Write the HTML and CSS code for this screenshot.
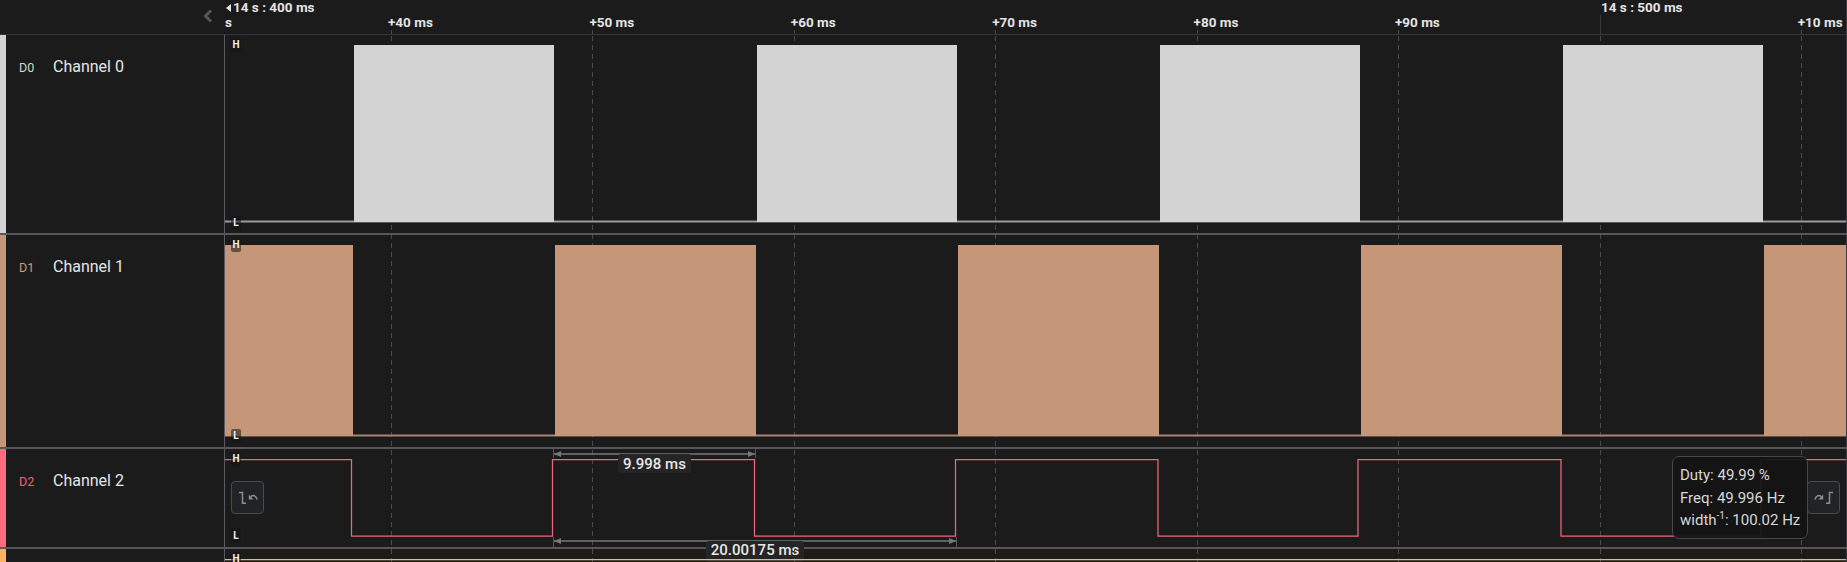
FILE: index.html
```html
<!DOCTYPE html>
<html lang="en">
  <head>
    <meta charset="UTF-8">
    <title>Logic analyzer</title>
    <link rel="stylesheet" href="styles.css">
  </head>
  <body>
    <!-- Time axis -->
    <header class="top">
      <div class="top-side">
        <svg class="chevron" width="10" height="14" viewBox="0 0 10 14"><path d="M8 1.500 2.500 7 8 12.500"/></svg>
      </div>
      <div class="axis">
        <svg class="axis-marks" viewBox="225 0 1621 34">
          <g class="grid">
            <line x1="391.500" y1="30" x2="391.500" y2="34"/>
            <line x1="592.500" y1="30" x2="592.500" y2="34"/>
            <line x1="794.500" y1="30" x2="794.500" y2="34"/>
            <line x1="995.500" y1="30" x2="995.500" y2="34"/>
            <line x1="1197.500" y1="30" x2="1197.500" y2="34"/>
            <line x1="1398.500" y1="30" x2="1398.500" y2="34"/>
            <line x1="1801.500" y1="30" x2="1801.500" y2="34"/>
          </g>
          <line class="major-mark" x1="1600.500" y1="15" x2="1600.500" y2="34"/>
        </svg>
        <div class="axis-major">
          <span class="major-first"><i class="marker"></i>14 s : 400 ms</span>
          <span>14 s : 500 ms</span>
        </div>
        <div class="axis-minor">
          <span class="unit">s</span>
          <span class="tick">+40 ms</span>
          <span class="tick">+50 ms</span>
          <span class="tick">+60 ms</span>
          <span class="tick">+70 ms</span>
          <span class="tick">+80 ms</span>
          <span class="tick">+90 ms</span>
          <span class="tick"></span>
          <span class="tick">+10 ms</span>
        </div>
      </div>
    </header>

    <!-- D0 -->
    <section class="row row-d0">
      <div class="strip"></div>
      <div class="name-col">
        <span class="dnum">D0</span>
        <span class="cname">Channel 0</span>
      </div>
      <div class="plot">
        <svg class="wave" viewBox="225 35 1621 198">
          <defs>
            <g id="grid">
              <line x1="391.500" y1="0" x2="391.500" y2="562"/>
              <line x1="592.500" y1="0" x2="592.500" y2="562"/>
              <line x1="794.500" y1="0" x2="794.500" y2="562"/>
              <line x1="995.500" y1="0" x2="995.500" y2="562"/>
              <line x1="1197.500" y1="0" x2="1197.500" y2="562"/>
              <line x1="1398.500" y1="0" x2="1398.500" y2="562"/>
              <line class="major" x1="1600.500" y1="0" x2="1600.500" y2="562"/>
              <line x1="1801.500" y1="0" x2="1801.500" y2="562"/>
            </g>
          </defs>
          <use href="#grid" class="grid"/>
          <line class="low-d0" x1="225" y1="221.500" x2="1846" y2="221.500"/>
          <g class="fill-d0">
            <rect x="354" y="45" width="200" height="177"/>
            <rect x="757" y="45" width="200" height="177"/>
            <rect x="1160" y="45" width="200" height="177"/>
            <rect x="1563" y="45" width="200" height="177"/>
          </g>
        </svg>
        <span class="lvl lvl-h">H</span>
        <span class="lvl lvl-l">L</span>
      </div>
    </section>

    <!-- D1 -->
    <section class="row row-d1">
      <div class="strip"></div>
      <div class="name-col">
        <span class="dnum">D1</span>
        <span class="cname">Channel 1</span>
      </div>
      <div class="plot">
        <svg class="wave" viewBox="225 235 1621 212">
          <use href="#grid" class="grid"/>
          <line class="low-d1" x1="225" y1="435.500" x2="1846" y2="435.500"/>
          <g class="fill-d1">
            <rect x="225" y="245" width="128" height="191"/>
            <rect x="555" y="245" width="201" height="191"/>
            <rect x="958" y="245" width="201" height="191"/>
            <rect x="1361" y="245" width="201" height="191"/>
            <rect x="1764" y="245" width="82" height="191"/>
          </g>
        </svg>
        <span class="lvl lvl-h">H</span>
        <span class="lvl lvl-l">L</span>
      </div>
    </section>

    <!-- D2, with measurements -->
    <section class="row row-d2">
      <div class="strip"></div>
      <div class="name-col">
        <span class="dnum">D2</span>
        <span class="cname">Channel 2</span>
      </div>
      <div class="plot">
        <svg class="wave" viewBox="225 449 1621 98">
          <use href="#grid" class="grid"/>
          <path class="line-d2" d="M225 459.500H351.500V536H552.500V459.500H754.500V536H955.500V459.500H1158V536H1358V459.500H1561V536H1761V459.500H1846"/>
          <g class="measure">
            <line x1="554" y1="454" x2="755" y2="454"/>
            <line class="end" x1="553.500" y1="449" x2="553.500" y2="458"/>
            <line class="end" x1="755.500" y1="449" x2="755.500" y2="458"/>
            <path d="M554 454l7-3v6zM755 454l-7-3v6z"/>
            <line x1="554" y1="541" x2="956" y2="541"/>
            <line class="end" x1="553.500" y1="537" x2="553.500" y2="547"/>
            <line class="end" x1="956.500" y1="537" x2="956.500" y2="547"/>
            <path d="M554 541l7-3v6zM956 541l-7-3v6z"/>
          </g>
        </svg>
        <span class="lvl lvl-h">H</span>
        <span class="lvl lvl-l">L</span>
        <span class="mlabel mlabel-width">9.998 ms</span>
        <span class="mlabel mlabel-period">20.00175 ms</span>
        <button class="edge edge-prev">
          <svg width="24" height="16" viewBox="0 0 24 16"><path d="M3 2.500H6.500V13.200H10"/><path d="M21 9.500C20 5.500 16.500 4.500 14.500 7"/><path class="head" d="M12.800 4.500V9.500H17.500z"/></svg>
        </button>
        <button class="edge edge-next">
          <svg class="flip" width="24" height="16" viewBox="0 0 24 16"><path d="M3 2.500H6.500V13.200H10"/><path d="M21 9.500C20 5.500 16.500 4.500 14.500 7"/><path class="head" d="M12.800 4.500V9.500H17.500z"/></svg>
        </button>
        <div class="tip">
          <div>Duty: 49.99 %</div>
          <div>Freq: 49.996 Hz</div>
          <div>width<sup>-1</sup>: 100.02 Hz</div>
        </div>
      </div>
    </section>

    <!-- D3, cut off by the window -->
    <section class="row row-d3">
      <div class="strip"></div>
      <div class="name-col"></div>
      <div class="plot">
        <svg class="wave" viewBox="225 549 1621 13">
          <use href="#grid" class="grid"/>
          <line class="line-d3" x1="225" y1="559.500" x2="1846" y2="559.500"/>
        </svg>
        <span class="lvl lvl-h">H</span>
      </div>
    </section>
  </body>
</html>
```

FILE: styles.css
```css
html, body {
    margin: 0;
    height: 562px;
    overflow: hidden;
}
body {
    background-color: #1b1b1c;
    font-family: Roboto, "Liberation Sans", sans-serif;
    color: #e6e6e6;
}

/* top bar */
.top {
    display: flex;
    height: 35px;
    box-sizing: border-box;
    border-bottom: 1px solid #35353c;
}
.top-side {
    width: 225px;
    flex: none;
    display: flex;
    justify-content: flex-end;
    padding-top: 9px;
    box-sizing: border-box;
    padding-right: 12px;
}
.chevron {
    fill: none;
    stroke: #55565a;
    stroke-width: 3;
}
.axis {
    position: relative;
    flex: 1;
    min-width: 0;
    overflow: hidden;
    font-size: 13.500px;
    font-weight: 700;
    color: #e4e4e4;
    border-right: 1px solid #3a3a40;
}
.axis-marks {
    position: absolute;
    left: 0;
    top: 0;
    width: 100%;
    height: 34px;
}
.major-mark {
    stroke: #3a3a3e;
    stroke-width: 1;
}
.axis-major {
    display: flex;
    height: 15px;
    line-height: 15px;
}
.major-first {
    width: 1376px;
    flex: none;
    display: flex;
    align-items: center;
    padding-left: 1px;
    box-sizing: border-box;
    gap: 2px;
}
.marker {
    width: 0;
    height: 0;
    border-top: 4px solid transparent;
    border-bottom: 4px solid transparent;
    border-right: 5px solid #e4e4e4;
}
.axis-minor {
    display: flex;
    height: 19px;
    line-height: 15px;
}
.unit {
    width: 163px;
    flex: none;
}
.tick {
    width: 201.400px;
    flex: none;
    white-space: nowrap;
}

/* channel rows */
.row {
    display: flex;
    box-sizing: border-box;
    border-bottom: 2px solid #56565c;
}
.row-d0 { height: 200px; }
.row-d1 { height: 214px; }
.row-d2 { height: 100px; }
.row-d3 { height: 13px; border-bottom: none; }
.strip {
    width: 6px;
    flex: none;
}
.row-d0 .strip { background-color: #d3d3d3; }
.row-d1 .strip { background-color: #c69679; }
.row-d2 .strip { background-color: #ff6b81; }
.row-d3 .strip { background-color: #ffb25e; }
.name-col {
    width: 218px;
    flex: none;
    box-sizing: border-box;
    display: flex;
    align-items: baseline;
    gap: 18px;
    padding: 22px 0 0 13px;
}
.dnum {
    font-size: 12.500px;
    width: 16px;
}
.row-d0 .dnum { color: #d3d8c8; }
.row-d1 .dnum { color: #d09a7a; }
.row-d2 .dnum { color: #ff5a6e; }
.cname {
    font-size: 16px;
    line-height: 20px;
    color: #e2e6ea;
}
.plot {
    position: relative;
    flex: 1;
    min-width: 0;
    border-left: 1px solid #5a5a62;
    border-right: 1px solid #3a3a40;
}
.wave {
    display: block;
    width: 100%;
    height: 100%;
    overflow: hidden;
}
.grid {
    stroke: #4a4a4e;
    stroke-width: 1;
    stroke-dasharray: 5 4;
}
.grid .major { stroke: #353538; }
.low-d0 {
    stroke: #9b9b9b;
    stroke-width: 2;
}
.fill-d0 { fill: #d3d3d3; }
.low-d1 {
    stroke: #a98570;
    stroke-width: 2;
}
.fill-d1 { fill: #c69679; }
.line-d2 {
    fill: none;
    stroke: #f0667a;
    stroke-width: 1.250;
}
.line-d3 {
    stroke: #ffb25e;
    stroke-width: 1.250;
}
.measure line {
    stroke: #77777a;
    stroke-width: 1.500;
}
.measure .end {
    stroke: #555558;
    stroke-width: 1;
}
.measure path { fill: #77777a; }

/* things laid over the waves */
.lvl {
    position: absolute;
    left: 6px;
    width: 10px;
    height: 14px;
    line-height: 14px;
    font-size: 10px;
    font-weight: 700;
    text-align: center;
    color: #f2f2f2;
    border-radius: 2px;
    background-color: rgba(20, 20, 20, 0.55);
}
.row-d0 .lvl-h { top: 3px; }
.row-d0 .lvl-l { top: 181px; }
.row-d1 .lvl-h { top: 3px; }
.row-d1 .lvl-l { top: 194px; }
.row-d2 .lvl-h { top: 3px; }
.row-d2 .lvl-l { top: 80px; }
.row-d3 .lvl-h { top: 3px; }
.mlabel {
    position: absolute;
    box-sizing: border-box;
    font-size: 15px;
    font-weight: 500;
    text-align: center;
    color: #e8e8e8;
    background-color: #252527;
    border-radius: 3px;
}
.mlabel-width {
    left: 393px;
    top: 5px;
    width: 73px;
    height: 19px;
    line-height: 20px;
}
.mlabel-period {
    left: 481px;
    top: 92px;
    width: 98px;
    height: 21px;
    line-height: 19px;
}
.edge {
    position: absolute;
    top: 32px;
    width: 33px;
    height: 33px;
    padding: 0;
    display: flex;
    align-items: center;
    justify-content: center;
    background-color: #222326;
    border: 1px solid #4a4b50;
    border-radius: 4px;
}
.edge svg {
    fill: none;
    stroke: #8c8c8c;
    stroke-width: 1.500;
}
.edge .head {
    fill: #8c8c8c;
    stroke: none;
}
.edge-prev { left: 6px; }
.edge-next { left: 1582px; }
.flip { transform: scaleX(-1); }
.tip {
    position: absolute;
    left: 1447px;
    top: 7px;
    width: 136px;
    height: 83px;
    box-sizing: border-box;
    padding: 7px 0 0 7px;
    font-size: 15px;
    line-height: 22.500px;
    color: #d8d8d8;
    white-space: nowrap;
    background-color: rgba(20, 20, 21, 0.94);
    border: 1px solid #48484c;
    border-radius: 7px;
}
.tip sup {
    font-size: 10px;
    line-height: 0;
}
```
